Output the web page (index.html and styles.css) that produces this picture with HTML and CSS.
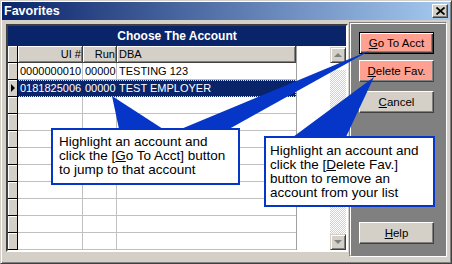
FILE: index.html
```html
<!DOCTYPE html>
<html lang="en">

<head>
    <meta charset="UTF-8">
    <meta name="viewport" content="width=device-width, initial-scale=1.0">
    <title>Favorites</title>
    <link rel="stylesheet" href="styles.css">
</head>

<body>
    <div class="window">
        <div class="titlebar">
            <span class="title">Favorites</span>
            <button class="close">
                <svg width="9" height="8" viewBox="0 0 9 8">
                    <path d="M0.5 0.5 L8.5 7.5 M8.5 0.5 L0.5 7.5" stroke="#000" stroke-width="1.8" />
                </svg>
            </button>
        </div>

        <div class="content">
            <div class="grid">
                <div class="caption">Choose The Account</div>
                <div class="grid-main">
                    <div class="table">
                        <div class="row head">
                            <div class="ind"></div>
                            <div class="cell ui">UI #</div>
                            <div class="cell run">Run</div>
                            <div class="cell dba">DBA</div>
                        </div>
                        <div class="row">
                            <div class="ind"></div>
                            <div class="cell ui">0000000010</div>
                            <div class="cell run">00000</div>
                            <div class="cell dba">TESTING 123</div>
                        </div>
                        <div class="row selected">
                            <div class="ind"><span class="arrow"></span></div>
                            <div class="cell ui">0181825006</div>
                            <div class="cell run">00000</div>
                            <div class="cell dba">TEST EMPLOYER</div>
                        </div>
                        <div class="row"><div class="ind"></div><div class="cell ui"></div><div class="cell run"></div><div class="cell dba"></div></div>
                        <div class="row"><div class="ind"></div><div class="cell ui"></div><div class="cell run"></div><div class="cell dba"></div></div>
                        <div class="row"><div class="ind"></div><div class="cell ui"></div><div class="cell run"></div><div class="cell dba"></div></div>
                        <div class="row"><div class="ind"></div><div class="cell ui"></div><div class="cell run"></div><div class="cell dba"></div></div>
                        <div class="row"><div class="ind"></div><div class="cell ui"></div><div class="cell run"></div><div class="cell dba"></div></div>
                        <div class="row"><div class="ind"></div><div class="cell ui"></div><div class="cell run"></div><div class="cell dba"></div></div>
                        <div class="row"><div class="ind"></div><div class="cell ui"></div><div class="cell run"></div><div class="cell dba"></div></div>
                        <div class="row"><div class="ind"></div><div class="cell ui"></div><div class="cell run"></div><div class="cell dba"></div></div>
                        <div class="row"><div class="ind"></div><div class="cell ui"></div><div class="cell run"></div><div class="cell dba"></div></div>
                    </div>
                    <div class="filler"></div>
                    <div class="scrollbar">
                        <div class="sb-btn"><span class="tri up"></span></div>
                        <div class="sb-track"></div>
                        <div class="sb-btn"><span class="tri down"></span></div>
                    </div>
                </div>
            </div>

            <div class="panel">
                <div class="panel-inner">
                    <button class="btn default salmon"><u>G</u>o To Acct</button>
                    <button class="btn salmon delete"><u>D</u>elete Fav.</button>
                    <button class="btn cancel"><u>C</u>ancel</button>
                    <button class="btn help"><u>H</u>elp</button>
                </div>
            </div>
        </div>

        <svg class="pointers" width="452" height="264" viewBox="0 0 452 264">
            <polygon points="111,95 118,128 162,128" />
            <polygon points="370,49 180,128 228,128" />
            <polygon points="373,76 292,136 345,136" />
        </svg>

        <div class="callout callout-go">
            Highlight an account and<br>
            click the [<u>G</u>o To Acct] button<br>
            to jump to that account
        </div>

        <div class="callout callout-del">
            Highlight an account and<br>
            click the [<u>D</u>elete Fav.]<br>
            button to remove an<br>
            account from your list
        </div>
    </div>
</body>

</html>
```

FILE: styles.css
```css
body {
    margin: 0;
    font-family: "Liberation Sans", Arial, sans-serif;
    color: #000;
}

.window {
    position: relative;
    width: 452px;
    height: 264px;
    box-sizing: border-box;
    padding: 1px;
    background-color: #d4d0c8;
    border: 1px solid;
    border-color: #d4d0c8 #404040 #404040 #d4d0c8;
    box-shadow: inset 1px 1px #fff, inset -1px -1px #808080;
}

.titlebar {
    display: flex;
    align-items: center;
    justify-content: space-between;
    height: 18px;
    padding: 0 2px 0 2px;
    background: linear-gradient(to right, #0a246a, #a6caf0);
}

.title {
    color: white;
    font-weight: bold;
    font-size: 12.5px;
}

.close {
    width: 16px;
    height: 14px;
    padding: 0;
    display: flex;
    align-items: center;
    justify-content: center;
    background-color: #d4d0c8;
    border: 1px solid;
    border-color: #fff #404040 #404040 #fff;
    box-shadow: inset -1px -1px #808080;
}

.content {
    display: flex;
    align-items: flex-start;
    gap: 1px;
    padding: 2px 0 0 4px;
}

/* data grid */

.grid {
    margin-top: 2px;
    width: 342px;
    height: 228px;
    box-sizing: border-box;
    border: 2px solid;
    border-color: #404040 #fff #fff #404040;
    background-color: #fff;
    display: flex;
    flex-direction: column;
}

.caption {
    height: 20px;
    line-height: 20px;
    background-color: #0a246a;
    color: white;
    font-weight: bold;
    font-size: 12px;
    text-align: center;
}

.grid-main {
    display: flex;
    flex: 1;
}

.table {
    width: 288px;
    border-right: 1px solid #a0a0a0;
}

.row {
    display: flex;
    height: 17px;
    font-size: 11px;
    line-height: 16px;
    color: #000;
}

.ind {
    flex: none;
    width: 10px;
    box-sizing: border-box;
    background-color: #d4d0c8;
    border-right: 1px solid #000;
    border-bottom: 1px solid #000;
    box-shadow: inset 1px 1px #fff;
    position: relative;
}

.cell {
    box-sizing: border-box;
    border-right: 1px solid #c0c0c0;
    border-bottom: 1px solid #c0c0c0;
    padding: 0 2px;
    white-space: nowrap;
    overflow: hidden;
}

.cell.ui {
    width: 65px;
    text-align: right;
    padding-right: 1px;
}

.cell.run {
    width: 34px;
    text-align: right;
    padding-right: 1px;
}

.cell.dba {
    width: 179px;
    border-right: none;
}

.row.head .cell {
    background-color: #d4d0c8;
    border-right: 1px solid #404040;
    border-bottom: 1px solid #404040;
    box-shadow: inset 1px 1px #fff, inset -1px -1px #808080;
}

.row.selected {
    outline: 1px dotted #e8e8a8;
    outline-offset: -1px;
}

.row.selected .cell {
    background-color: #0a246a;
    color: white;
    border-color: #0a246a;
}

.arrow {
    position: absolute;
    left: 3px;
    top: 4px;
    border-left: 4px solid #000;
    border-top: 4px solid transparent;
    border-bottom: 4px solid transparent;
}

.filler {
    width: 34px;
}

.scrollbar {
    width: 16px;
    display: flex;
    flex-direction: column;
    padding-top: 1px;
}

.sb-btn {
    height: 16px;
    box-sizing: border-box;
    background-color: #d4d0c8;
    border: 1px solid;
    border-color: #d4d0c8 #404040 #404040 #d4d0c8;
    box-shadow: inset 1px 1px #fff, inset -1px -1px #808080;
    display: flex;
    align-items: center;
    justify-content: center;
}

.sb-track {
    flex: 1;
    background: repeating-conic-gradient(#d4d0c8 0 25%, #fff 0 50%) 0 0 / 2px 2px;
    border-top: 7px solid #fff;
}

.tri {
    width: 0;
    height: 0;
    border-left: 4px solid transparent;
    border-right: 4px solid transparent;
}

.tri.up {
    border-bottom: 4px solid #808080;
}

.tri.down {
    border-top: 4px solid #808080;
}

/* button panel */

.panel {
    width: 98px;
    height: 235px;
    box-sizing: border-box;
    border: 1px solid;
    border-color: #808080 #fff #fff #808080;
    background-color: #808080;
}

.panel-inner {
    height: 100%;
    box-sizing: border-box;
    border: 1px solid;
    border-color: #fff #808080 #808080 #fff;
    display: flex;
    flex-direction: column;
    padding: 8px 0 11px 8px;
}

.btn {
    width: 75px;
    height: 22px;
    padding: 0;
    font-family: "Liberation Sans", Arial, sans-serif;
    font-size: 11.5px;
    color: #000;
    background-color: #d4d0c8;
    border: 1px solid;
    border-color: #fff #404040 #404040 #fff;
    box-shadow: inset -1px -1px #808080;
}

.btn.salmon {
    background-color: #ffa090;
}

.btn.default {
    border: 1px solid #000;
    box-shadow: inset 1px 1px #fff, inset -1px -1px #404040, inset -2px -2px #808080;
}

.btn.delete {
    margin-top: 6px;
    border-color: #fff #ff0000 #404040 #fff;
}

.btn.cancel {
    margin-top: 9px;
}

.btn.help {
    margin-top: auto;
}

/* callouts */

.pointers {
    position: absolute;
    left: 0;
    top: 0;
}

.pointers polygon {
    fill: #0636c8;
}

.callout {
    position: absolute;
    box-sizing: border-box;
    background-color: white;
    border: 2px solid #0636c8;
    font-size: 13.5px;
    line-height: 14px;
    color: #000;
}

.callout-go {
    left: 50px;
    top: 127px;
    width: 189px;
    height: 57px;
    padding: 5px 0 0 6px;
}

.callout-del {
    left: 263px;
    top: 135px;
    width: 171px;
    height: 71px;
    padding: 6px 0 0 4px;
}
```
